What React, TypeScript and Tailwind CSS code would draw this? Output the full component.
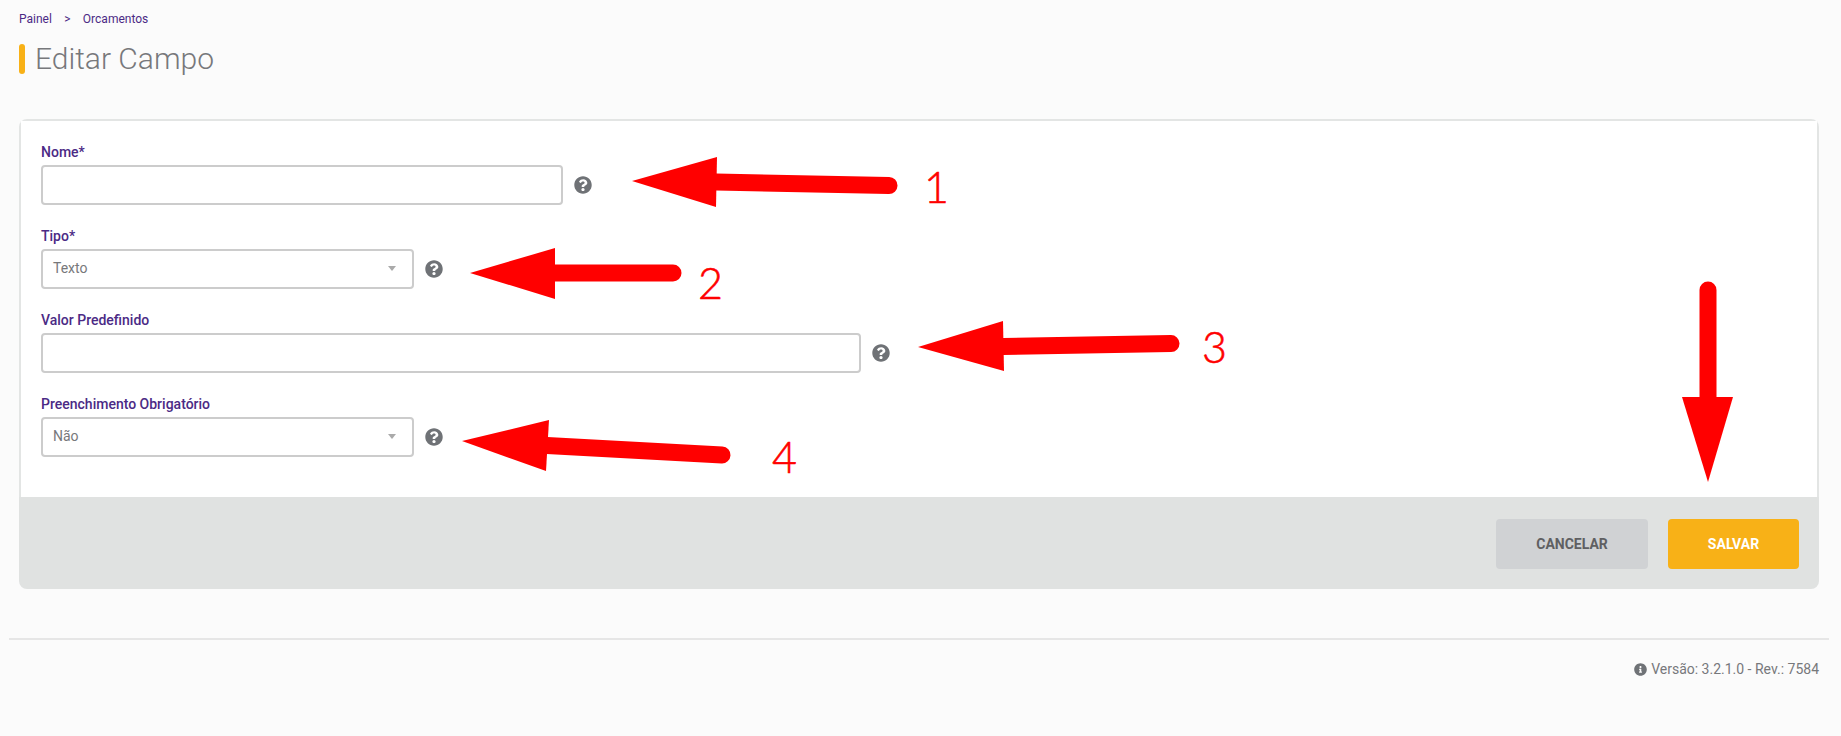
import { FaInfoCircle, FaQuestionCircle } from "react-icons/fa";

const fields = [
  { label: "Nome*", type: "input", width: "w-[522px]" },
  { label: "Tipo*", type: "select", value: "Texto", width: "w-[373px]" },
  { label: "Valor Predefinido", type: "input", width: "w-[820px]" },
  { label: "Preenchimento Obrigatório", type: "select", value: "Não", width: "w-[373px]" },
];

// red arrows drawn over the screenshot
function Annotations() {
  return (
    <svg className="absolute left-0 top-0 pointer-events-none" width="1841" height="736">
      <g fill="#ff0000">
        <polygon points="632,181 717,157 716,207" />
        <polygon points="470,273 555,248 555,299" />
        <polygon points="918,347 1003,321 1004,371" />
        <polygon points="462,441 549,420 546,471" />
        <polygon points="1682,397 1733,397 1708,482" />
      </g>
      <g stroke="#ff0000" strokeWidth="17" strokeLinecap="round" fill="none">
        <line x1="716" y1="182" x2="889" y2="185.5" />
        <line x1="554" y1="273" x2="673" y2="273" />
        <line x1="1003" y1="346.5" x2="1171" y2="343.5" />
        <line x1="547" y1="445.5" x2="722" y2="455" />
        <line x1="1708" y1="290" x2="1708" y2="400" />
      </g>
      <g fill="#ff0000" stroke="#ff0000" strokeWidth="0.6" fontSize="43" fontWeight="300" className="[font-family:Lato,sans-serif]">
        <text x="924" y="203">1</text>
        <text x="698" y="299">2</text>
        <text x="1202" y="363">3</text>
        <text x="772" y="473">4</text>
      </g>
    </svg>
  );
}

export default function App() {
  return (
    <div className="relative min-h-screen bg-[#fbfbfb] pl-[19px] pr-[22px] pt-[10px] [font-family:Roboto,sans-serif]">
      <div className="flex items-center h-[18px] text-xs text-[#4b2a85]">
        <span>Painel</span>
        <span className="w-[31px] text-center">&gt;</span>
        <span>Orcamentos</span>
      </div>

      <div className="flex items-center mt-[13px] h-9">
        <div className="w-[6px] h-[30px] rounded-sm bg-[#f8b117] mr-[10px]" />
        <h1 className="text-[30px] font-light text-[#77787b] -mt-[2px]">Editar Campo</h1>
      </div>

      <div className="mt-[42px] rounded-lg overflow-hidden">
        <div className="bg-white border-x-2 border-t-2 border-[#e3e5e4] pl-5 pt-[21px] pb-10 flex flex-col gap-[21px]">
          {fields.map((field) => (
            <div key={field.label}>
              <div className="h-5 leading-5 text-sm font-medium text-[#4b2a85] mb-[3px]">{field.label}</div>
              <div className="flex items-center gap-[11px]">
                {field.type === "input" ? (
                  <input className={`${field.width} h-10 border-2 border-[#cccccc] rounded bg-white`} />
                ) : (
                  <div className={`${field.width} h-10 border-2 border-[#cccccc] rounded bg-white flex items-center justify-between pl-[10px] pr-4 pb-[2px] text-sm text-[#77787b]`}>
                    <span>{field.value}</span>
                    <span className="w-0 h-0 border-x-4 border-t-[5px] border-x-transparent border-t-[#aaaaaa]" />
                  </div>
                )}
                <FaQuestionCircle className="text-[#6f7276]" size={18} />
              </div>
            </div>
          ))}
        </div>
        <div className="bg-[#e0e2e1] h-[92px] pt-[22px] pr-5 flex justify-end gap-5">
          <button className="w-[152px] h-[50px] rounded bg-[#d0d2d4] text-sm font-bold text-[#5f6062]">CANCELAR</button>
          <button className="w-[131px] h-[50px] rounded bg-[#f8b117] text-sm font-bold text-white">SALVAR</button>
        </div>
      </div>

      <div className="mt-[49px] -ml-[10px] -mr-[10px] border-t-2 border-[#e6e6e6]" />
      <div className="mt-[19px] flex items-center justify-end gap-1 h-5 text-sm text-[#77787b]">
        <FaInfoCircle className="text-[#6f7276]" size={13} />
        <span>Versão: 3.2.1.0 - Rev.: 7584</span>
      </div>

      <Annotations />
    </div>
  );
}
